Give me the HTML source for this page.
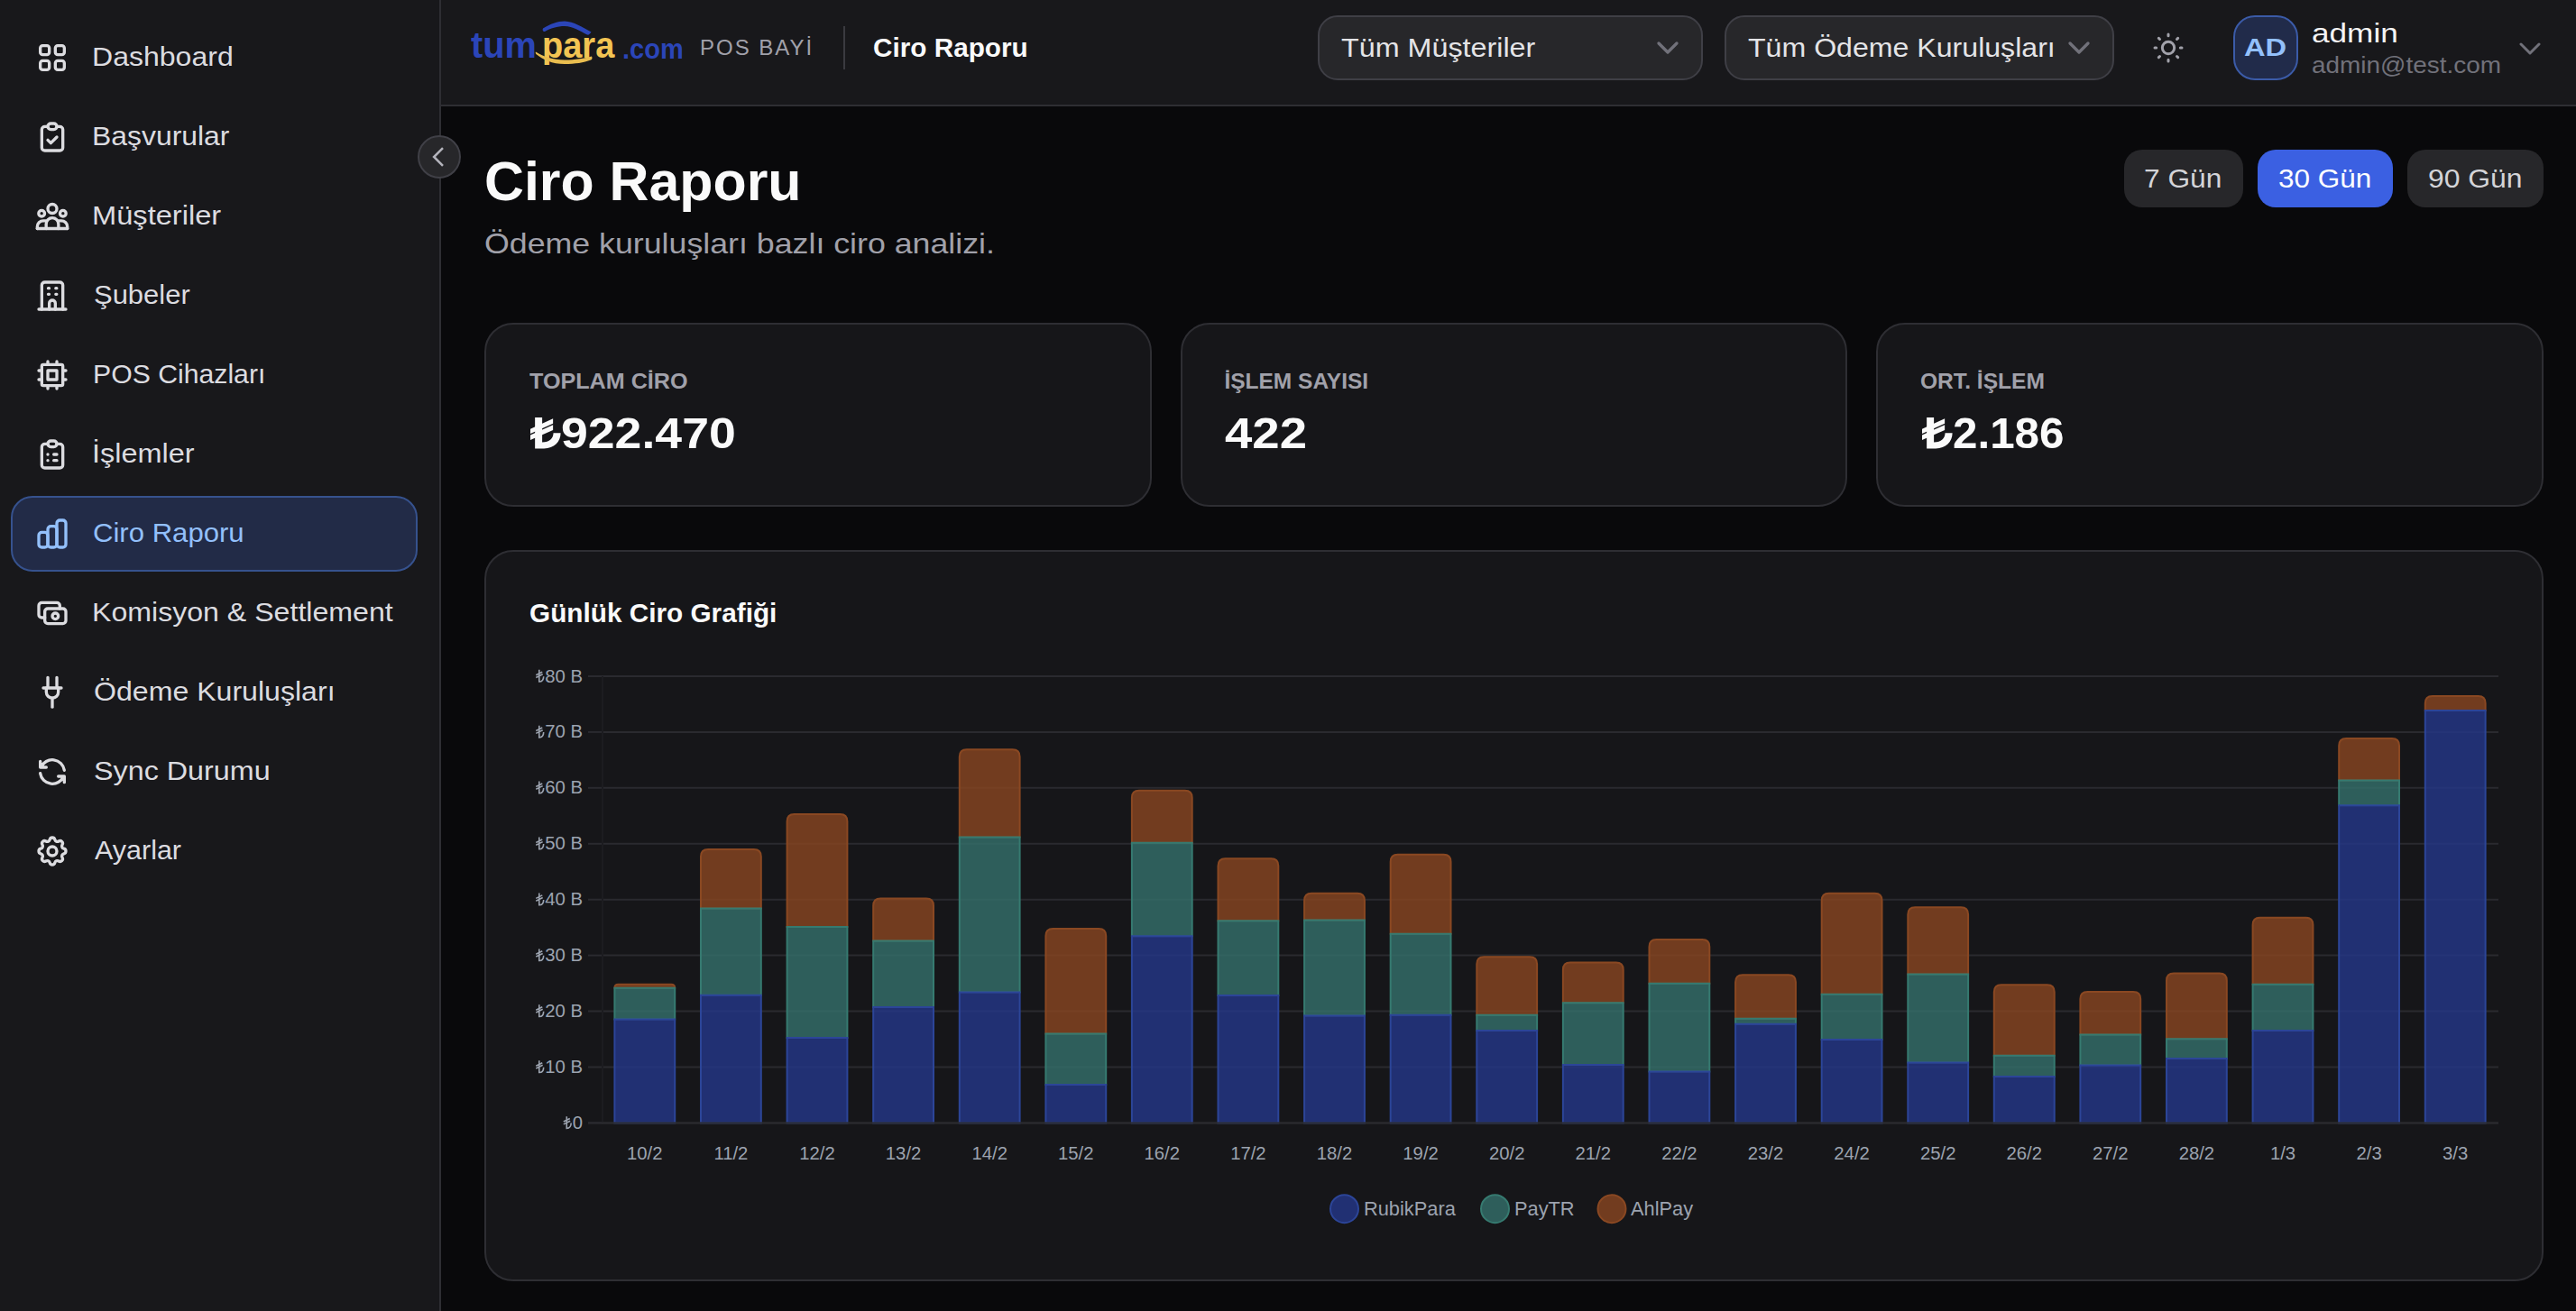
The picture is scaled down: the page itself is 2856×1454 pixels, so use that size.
<!DOCTYPE html>
<html><head><meta charset="utf-8"><title>Ciro Raporu</title>
<style>
html,body{margin:0;padding:0;}
body{width:2856px;height:1454px;overflow:hidden;position:relative;background:#09090b;font-family:"Liberation Sans",sans-serif;}
.t{position:absolute;line-height:1;white-space:nowrap;}
svg{display:block;}
</style></head><body>
<div style="position:absolute;left:0px;top:0px;width:487.0px;height:1454px;background:#18181b;border-radius:0px;"></div>
<div style="position:absolute;left:487px;top:0px;width:2.0px;height:1454px;background:#2e2e33;border-radius:0px;"></div>
<svg style="position:absolute;left:38.0px;top:44.0px;" width="40" height="40" viewBox="0 0 24 24" fill="none" stroke="#dcdce0" stroke-width="2" stroke-linecap="round" stroke-linejoin="round"><rect x="4" y="4" width="6" height="6" rx="1.6"/><rect x="14" y="4" width="6" height="6" rx="1.6"/><rect x="4" y="14" width="6" height="6" rx="1.6"/><rect x="14" y="14" width="6" height="6" rx="1.6"/></svg>
<div class="t" style="left:102.4px;top:49.2px;font-size:29px;color:#dcdce0;font-weight:normal;transform:scaleX(1.1045);transform-origin:0 0;">Dashboard</div>
<svg style="position:absolute;left:38.0px;top:132.0px;" width="40" height="40" viewBox="0 0 24 24" fill="none" stroke="#dcdce0" stroke-width="2" stroke-linecap="round" stroke-linejoin="round"><path d="M9 5h-2a2 2 0 0 0 -2 2v12a2 2 0 0 0 2 2h10a2 2 0 0 0 2 -2v-12a2 2 0 0 0 -2 -2h-2"/><path d="M9 5a2 2 0 0 1 2 -2h2a2 2 0 0 1 2 2a2 2 0 0 1 -2 2h-2a2 2 0 0 1 -2 -2z"/><path d="M9 14l2 2l4 -4"/></svg>
<div class="t" style="left:102.4px;top:137.2px;font-size:29px;color:#dcdce0;font-weight:normal;transform:scaleX(1.0998);transform-origin:0 0;">Başvurular</div>
<svg style="position:absolute;left:38.0px;top:220.0px;" width="40" height="40" viewBox="0 0 24 24" fill="none" stroke="#dcdce0" stroke-width="2" stroke-linecap="round" stroke-linejoin="round"><circle cx="12" cy="6.9" r="3"/><circle cx="4.9" cy="10" r="2"/><circle cx="19.1" cy="10" r="2"/><path d="M2 20.1v-1.2a4 4 0 0 1 4 -4h2"/><path d="M22 20.1v-1.2a4 4 0 0 0 -4 -4h-2"/><path d="M7.9 20.1v-3a4.1 4.1 0 0 1 8.2 0v3"/><path d="M2 20.1h20"/></svg>
<div class="t" style="left:102.3px;top:225.2px;font-size:29px;color:#dcdce0;font-weight:normal;transform:scaleX(1.1250);transform-origin:0 0;">Müşteriler</div>
<svg style="position:absolute;left:38.0px;top:308.0px;" width="40" height="40" viewBox="0 0 24 24" fill="none" stroke="#dcdce0" stroke-width="2" stroke-linecap="round" stroke-linejoin="round"><path d="M3 21h18"/><path d="M5 21v-16a2 2 0 0 1 2 -2h10a2 2 0 0 1 2 2v16"/><path d="M9.3 7h.6M14.3 7h.6M9.3 11h.6M14.3 11h.6"/><path d="M10 21v-4a2 2 0 0 1 4 0v4"/></svg>
<div class="t" style="left:103.6px;top:313.2px;font-size:29px;color:#dcdce0;font-weight:normal;transform:scaleX(1.0677);transform-origin:0 0;">Şubeler</div>
<svg style="position:absolute;left:38.0px;top:396.0px;" width="40" height="40" viewBox="0 0 24 24" fill="none" stroke="#dcdce0" stroke-width="2" stroke-linecap="round" stroke-linejoin="round"><path d="M5 6a1 1 0 0 1 1 -1h12a1 1 0 0 1 1 1v12a1 1 0 0 1 -1 1h-12a1 1 0 0 1 -1 -1z"/><path d="M9 9h6v6h-6z"/><path d="M3 9h2M3 15h2M9 3v2M15 3v2M21 9h-2M21 15h-2M15 21v-2M9 21v-2"/></svg>
<div class="t" style="left:102.5px;top:401.2px;font-size:29px;color:#dcdce0;font-weight:normal;transform:scaleX(1.0415);transform-origin:0 0;">POS Cihazları</div>
<svg style="position:absolute;left:38.0px;top:484.0px;" width="40" height="40" viewBox="0 0 24 24" fill="none" stroke="#dcdce0" stroke-width="2" stroke-linecap="round" stroke-linejoin="round"><path d="M9 5h-2a2 2 0 0 0 -2 2v12a2 2 0 0 0 2 2h10a2 2 0 0 0 2 -2v-12a2 2 0 0 0 -2 -2h-2"/><path d="M9 5a2 2 0 0 1 2 -2h2a2 2 0 0 1 2 2a2 2 0 0 1 -2 2h-2a2 2 0 0 1 -2 -2z"/><path d="M9 12h.01M13 12h2M9 16h.01M13 16h2"/></svg>
<div class="t" style="left:102.0px;top:489.2px;font-size:29px;color:#dcdce0;font-weight:normal;transform:scaleX(1.1184);transform-origin:0 0;">İşlemler</div>
<div style="position:absolute;left:12px;top:550px;width:451.0px;height:84px;background:#222b47;border:2px solid #36528e;box-sizing:border-box;border-radius:24px;"></div>
<svg style="position:absolute;left:38.0px;top:572.0px;" width="40" height="40" viewBox="0 0 24 24" fill="none" stroke="#93c0fb" stroke-width="2" stroke-linecap="round" stroke-linejoin="round"><path d="M3 13a2 2 0 0 1 2 -2h2a2 2 0 0 1 2 2v6a2 2 0 0 1 -2 2h-2a2 2 0 0 1 -2 -2z"/><path d="M9 9a2 2 0 0 1 2 -2h2a2 2 0 0 1 2 2v10a2 2 0 0 1 -2 2h-2a2 2 0 0 1 -2 -2z"/><path d="M15 5a2 2 0 0 1 2 -2h2a2 2 0 0 1 2 2v14a2 2 0 0 1 -2 2h-2a2 2 0 0 1 -2 -2z"/></svg>
<div class="t" style="left:103.4px;top:577.2px;font-size:29px;color:#93c0fb;font-weight:normal;transform:scaleX(1.0723);transform-origin:0 0;">Ciro Raporu</div>
<svg style="position:absolute;left:38.0px;top:660.0px;" width="40" height="40" viewBox="0 0 24 24" fill="none" stroke="#dcdce0" stroke-width="2" stroke-linecap="round" stroke-linejoin="round"><path d="M7 11a2 2 0 0 1 2 -2h10a2 2 0 0 1 2 2v6a2 2 0 0 1 -2 2h-10a2 2 0 0 1 -2 -2z"/><circle cx="14" cy="14" r="2"/><path d="M17 9v-2a2 2 0 0 0 -2 -2h-10a2 2 0 0 0 -2 2v6a2 2 0 0 0 2 2h2"/></svg>
<div class="t" style="left:102.4px;top:665.2px;font-size:29px;color:#dcdce0;font-weight:normal;transform:scaleX(1.1070);transform-origin:0 0;">Komisyon &amp; Settlement</div>
<svg style="position:absolute;left:38.0px;top:748.0px;" width="40" height="40" viewBox="0 0 24 24" fill="none" stroke="#dcdce0" stroke-width="2" stroke-linecap="round" stroke-linejoin="round"><path d="M9 2v6M15 2v6"/><path d="M6 9h12"/><path d="M8 9v2.7a4 4 0 0 0 8 0v-2.7"/><path d="M12 15.7v6"/></svg>
<div class="t" style="left:103.5px;top:753.2px;font-size:29px;color:#dcdce0;font-weight:normal;transform:scaleX(1.1067);transform-origin:0 0;">Ödeme Kuruluşları</div>
<svg style="position:absolute;left:38.0px;top:836.0px;" width="40" height="40" viewBox="0 0 24 24" fill="none" stroke="#dcdce0" stroke-width="2" stroke-linecap="round" stroke-linejoin="round"><path d="M20 11a8.1 8.1 0 0 0 -15.5 -2m-.5 -4v4h4"/><path d="M4 13a8.1 8.1 0 0 0 15.5 2m.5 4v-4h-4"/></svg>
<div class="t" style="left:103.5px;top:841.2px;font-size:29px;color:#dcdce0;font-weight:normal;transform:scaleX(1.1135);transform-origin:0 0;">Sync Durumu</div>
<svg style="position:absolute;left:38.0px;top:924.0px;" width="40" height="40" viewBox="0 0 24 24" fill="none" stroke="#dcdce0" stroke-width="2" stroke-linecap="round" stroke-linejoin="round"><path d="M10.325 4.317c.426 -1.756 2.924 -1.756 3.35 0a1.724 1.724 0 0 0 2.573 1.066c1.543 -.94 3.31 .826 2.37 2.37a1.724 1.724 0 0 0 1.065 2.572c1.756 .426 1.756 2.924 0 3.35a1.724 1.724 0 0 0 -1.066 2.573c.94 1.543 -.826 3.31 -2.37 2.37a1.724 1.724 0 0 0 -2.572 1.065c-.426 1.756 -2.924 1.756 -3.35 0a1.724 1.724 0 0 0 -2.573 -1.066c-1.543 .94 -3.31 -.826 -2.37 -2.37a1.724 1.724 0 0 0 -1.065 -2.572c-1.756 -.426 -1.756 -2.924 0 -3.35a1.724 1.724 0 0 0 1.066 -2.573c-.94 -1.543 .826 -3.31 2.37 -2.37c1 .608 2.296 .07 2.572 -1.065z"/><circle cx="12" cy="12" r="3"/></svg>
<div class="t" style="left:104.9px;top:929.2px;font-size:29px;color:#dcdce0;font-weight:normal;transform:scaleX(1.0513);transform-origin:0 0;">Ayarlar</div>
<div style="position:absolute;left:463px;top:150px;width:48.0px;height:48px;background:#27272a;border:2px solid #404047;box-sizing:border-box;border-radius:24px;"></div>
<svg style="position:absolute;left:471.0px;top:158.0px;stroke-linecap:butt;stroke-linejoin:miter" width="32" height="32" viewBox="0 0 24 24" fill="none" stroke="#b4b4bc" stroke-width="1.9" stroke-linecap="round" stroke-linejoin="round"><path d="M15 4.6L7.6 12L15 19.4"/></svg>
<div style="position:absolute;left:489px;top:0px;width:2367.0px;height:116px;background:#18181b;border-radius:0px;"></div>
<div style="position:absolute;left:489px;top:116px;width:2367.0px;height:2px;background:#2e2e33;border-radius:0px;"></div>
<div class="t" style="left:521.5px;top:30.3px;font-size:41px;color:#2b45b8;font-weight:bold;transform:scaleX(0.9707);transform-origin:0 0;">tum</div>
<div class="t" style="left:600.5px;top:30.3px;font-size:41px;color:#f2c453;font-weight:bold;transform:scaleX(0.9268);transform-origin:0 0;">para</div>
<div class="t" style="left:690.0px;top:38.8px;font-size:31px;color:#2b45b8;font-weight:bold;transform:scaleX(0.9367);transform-origin:0 0;">.com</div>
<svg style="position:absolute;left:0;top:0" width="800" height="100"><path d="M602 31.5 C610 26.5 618 23.5 626 23.5 C636 24 646 30 655.5 35.5 C654 38 652.5 39 651 38.5 C643 34.5 635 29 626 29 C618 29 610 31.5 604 35 C602 35.5 601 33 602 31.5Z" fill="#2b45b8"/><path d="M594 57.5 C603 63 613 66.5 626 66.5 C638 66.5 648 64.5 656 62.5 C657 64 656.5 66 655 66.5 C647 69.5 638 71 626 71 C612 71 602 66 595 60.5 C593.5 59.5 593.5 58 594 57.5Z" fill="#e9bd4f"/></svg>
<div class="t" style="left:776.0px;top:40.7px;font-size:24px;color:#a1a1aa;font-weight:normal;letter-spacing:2px">POS BAYİ</div>
<div style="position:absolute;left:935px;top:29px;width:2.0px;height:48px;background:#3a3a40;border-radius:0px;"></div>
<div class="t" style="left:968.3px;top:38.7px;font-size:29px;color:#fafafa;font-weight:bold;transform:scaleX(1.0246);transform-origin:0 0;">Ciro Raporu</div>
<div style="position:absolute;left:1461px;top:17px;width:427.0px;height:72px;background:#27272a;border:2px solid #3f3f46;box-sizing:border-box;border-radius:22px;"></div>
<div class="t" style="left:1487.3px;top:37.9px;font-size:30px;color:#e4e4e7;font-weight:normal;transform:scaleX(1.0762);transform-origin:0 0;">Tüm Müşteriler</div>
<svg style="position:absolute;left:1829.0px;top:33.0px;" width="40" height="40" viewBox="0 0 24 24" fill="none" stroke="#71717a" stroke-width="2" stroke-linecap="round" stroke-linejoin="round"><path d="M6 9l6 6l6 -6"/></svg>
<div style="position:absolute;left:1912px;top:17px;width:432.0px;height:72px;background:#27272a;border:2px solid #3f3f46;box-sizing:border-box;border-radius:22px;"></div>
<div class="t" style="left:1938.3px;top:37.9px;font-size:30px;color:#e4e4e7;font-weight:normal;transform:scaleX(1.0701);transform-origin:0 0;">Tüm Ödeme Kuruluşları</div>
<svg style="position:absolute;left:2285.0px;top:33.0px;" width="40" height="40" viewBox="0 0 24 24" fill="none" stroke="#71717a" stroke-width="2" stroke-linecap="round" stroke-linejoin="round"><path d="M6 9l6 6l6 -6"/></svg>
<svg style="position:absolute;left:2384.0px;top:33.0px;" width="40" height="40" viewBox="0 0 24 24" fill="none" stroke="#a1a1aa" stroke-width="1.8" stroke-linecap="round" stroke-linejoin="round"><circle cx="12" cy="12" r="4"/><path d="M3 12h1m8 -9v1m8 8h1m-9 8v1m-6.4 -15.4l.7 .7m12.1 -.7l-.7 .7m0 11.4l.7 .7m-12.1 -.7l-.7 .7"/></svg>
<div style="position:absolute;left:2476px;top:17px;width:72.0px;height:72px;background:#212b4a;border:2px solid #3b5ba8;box-sizing:border-box;border-radius:24px;"></div>
<div class="t" style="left:2488.2px;top:40.1px;font-size:27px;color:#93c0fb;font-weight:bold;transform:scaleX(1.2100);transform-origin:0 0;">AD</div>
<div class="t" style="left:2562.5px;top:22.1px;font-size:30px;color:#f4f4f5;font-weight:normal;transform:scaleX(1.1722);transform-origin:0 0;">admin</div>
<div class="t" style="left:2562.8px;top:59.0px;font-size:26px;color:#71717a;font-weight:normal;transform:scaleX(1.0746);transform-origin:0 0;">admin@test.com</div>
<svg style="position:absolute;left:2784.5px;top:34.0px;" width="40" height="40" viewBox="0 0 24 24" fill="none" stroke="#71717a" stroke-width="1.8" stroke-linecap="round" stroke-linejoin="round"><path d="M6 9l6 6l6 -6"/></svg>
<div class="t" style="left:536.5px;top:171.4px;font-size:61px;color:#fafafa;font-weight:bold;transform:scaleX(0.9973);transform-origin:0 0;">Ciro Raporu</div>
<div class="t" style="left:536.8px;top:255.2px;font-size:30.5px;color:#a1a1aa;font-weight:normal;transform:scaleX(1.1715);transform-origin:0 0;">Ödeme kuruluşları bazlı ciro analizi.</div>
<div style="position:absolute;left:2355px;top:166px;width:132.0px;height:64px;background:#27272a;border-radius:20px;"></div>
<div class="t" style="left:2377.4px;top:183.9px;font-size:29px;color:#d4d4d8;font-weight:normal;transform:scaleX(1.0922);transform-origin:0 0;">7 Gün</div>
<div style="position:absolute;left:2503px;top:166px;width:150.0px;height:64px;background:#3b60e2;border-radius:20px;"></div>
<div class="t" style="left:2525.8px;top:183.9px;font-size:29px;color:#ffffff;font-weight:normal;transform:scaleX(1.0853);transform-origin:0 0;">30 Gün</div>
<div style="position:absolute;left:2669px;top:166px;width:151.0px;height:64px;background:#27272a;border-radius:20px;"></div>
<div class="t" style="left:2691.5px;top:183.9px;font-size:29px;color:#d4d4d8;font-weight:normal;transform:scaleX(1.0992);transform-origin:0 0;">90 Gün</div>
<div style="position:absolute;left:537px;top:358px;width:739.7px;height:204px;background:#161619;border:2px solid #2e2e33;box-sizing:border-box;border-radius:32px;"></div>
<div class="t" style="left:586.7px;top:411.1px;font-size:24.5px;color:#a1a1aa;font-weight:bold;transform:scaleX(1.0259);transform-origin:0 0;">TOPLAM CİRO</div>
<svg style="position:absolute;left:588px;top:462.5px;overflow:visible" width="34.5" height="34.5" viewBox="0 0 1 1" fill="#fafafa"><path d="M0.149 0H0.380V0.80C0.62 0.80 0.74 0.67 0.74 0.503H0.974C0.974 0.79 0.76 1.0 0.44 1.0H0.149Z"/><path d="M0 0.368L0.728 0.035V0.199L0 0.524Z"/><path d="M0 0.564L0.728 0.24V0.404L0 0.728Z"/></svg>
<div class="t" style="left:621.6px;top:455.5px;font-size:49px;color:#fafafa;font-weight:bold;transform:scaleX(1.0939);transform-origin:0 0;">922.470</div>
<div style="position:absolute;left:1308.7px;top:358px;width:739.6px;height:204px;background:#161619;border:2px solid #2e2e33;box-sizing:border-box;border-radius:32px;"></div>
<div class="t" style="left:1357.4px;top:411.1px;font-size:24.5px;color:#a1a1aa;font-weight:bold;">İŞLEM SAYISI</div>
<div class="t" style="left:1358.2px;top:455.5px;font-size:49px;color:#fafafa;font-weight:bold;transform:scaleX(1.1132);transform-origin:0 0;">422</div>
<div style="position:absolute;left:2080.3px;top:358px;width:739.7px;height:204px;background:#161619;border:2px solid #2e2e33;box-sizing:border-box;border-radius:32px;"></div>
<div class="t" style="left:2129.0px;top:411.1px;font-size:24.5px;color:#a1a1aa;font-weight:bold;transform:scaleX(1.0033);transform-origin:0 0;">ORT. İŞLEM</div>
<svg style="position:absolute;left:2131px;top:462.5px;overflow:visible" width="34.5" height="34.5" viewBox="0 0 1 1" fill="#fafafa"><path d="M0.149 0H0.380V0.80C0.62 0.80 0.74 0.67 0.74 0.503H0.974C0.974 0.79 0.76 1.0 0.44 1.0H0.149Z"/><path d="M0 0.368L0.728 0.035V0.199L0 0.524Z"/><path d="M0 0.564L0.728 0.24V0.404L0 0.728Z"/></svg>
<div class="t" style="left:2164.8px;top:455.5px;font-size:49px;color:#fafafa;font-weight:bold;transform:scaleX(1.0071);transform-origin:0 0;">2.186</div>
<div style="position:absolute;left:537px;top:610px;width:2283.0px;height:811px;background:#161619;border:2px solid #2e2e33;box-sizing:border-box;border-radius:32px;"></div>
<div class="t" style="left:586.8px;top:665.2px;font-size:29.5px;color:#fafafa;font-weight:bold;transform:scaleX(1.0083);transform-origin:0 0;">Günlük Ciro Grafiği</div>
<svg style="position:absolute;left:0;top:0" width="2856" height="1454" viewBox="0 0 2856 1454"><line x1="667" y1="1245.4" x2="2770" y2="1245.4" stroke="#2a2a2f" stroke-width="2"/><line x1="652" y1="1245.4" x2="667" y2="1245.4" stroke="#2a2a2f" stroke-width="2"/><line x1="667" y1="1183.5" x2="2770" y2="1183.5" stroke="#2a2a2f" stroke-width="2"/><line x1="652" y1="1183.5" x2="667" y2="1183.5" stroke="#2a2a2f" stroke-width="2"/><line x1="667" y1="1121.5" x2="2770" y2="1121.5" stroke="#2a2a2f" stroke-width="2"/><line x1="652" y1="1121.5" x2="667" y2="1121.5" stroke="#2a2a2f" stroke-width="2"/><line x1="667" y1="1059.6" x2="2770" y2="1059.6" stroke="#2a2a2f" stroke-width="2"/><line x1="652" y1="1059.6" x2="667" y2="1059.6" stroke="#2a2a2f" stroke-width="2"/><line x1="667" y1="997.7" x2="2770" y2="997.7" stroke="#2a2a2f" stroke-width="2"/><line x1="652" y1="997.7" x2="667" y2="997.7" stroke="#2a2a2f" stroke-width="2"/><line x1="667" y1="935.8" x2="2770" y2="935.8" stroke="#2a2a2f" stroke-width="2"/><line x1="652" y1="935.8" x2="667" y2="935.8" stroke="#2a2a2f" stroke-width="2"/><line x1="667" y1="873.8" x2="2770" y2="873.8" stroke="#2a2a2f" stroke-width="2"/><line x1="652" y1="873.8" x2="667" y2="873.8" stroke="#2a2a2f" stroke-width="2"/><line x1="667" y1="811.9" x2="2770" y2="811.9" stroke="#2a2a2f" stroke-width="2"/><line x1="652" y1="811.9" x2="667" y2="811.9" stroke="#2a2a2f" stroke-width="2"/><line x1="667" y1="750.0" x2="2770" y2="750.0" stroke="#2a2a2f" stroke-width="2"/><line x1="652" y1="750.0" x2="667" y2="750.0" stroke="#2a2a2f" stroke-width="2"/><line x1="668" y1="750.0" x2="668" y2="1245.4" stroke="#1c1c20" stroke-width="2"/><path d="M681.4 1095.7V1095.7Q681.4 1091.8 685.3 1091.8H744.3Q748.2 1091.8 748.2 1095.7V1095.7Z" fill="#8a4620" fill-opacity="0.8" stroke="#8a4822" stroke-width="2" /><path d="M681.4 1130.4V1095.7H748.2V1130.4Z" fill="#35716b" fill-opacity="0.8" stroke="#367a70" stroke-width="2" /><path d="M681.4 1245.4V1130.4H748.2V1245.4Z" fill="#24378a" fill-opacity="0.8" stroke="#2c4598" stroke-width="2" /><path d="M777.0 1007.6V950.0Q777.0 942.0 785.0 942.0H835.8Q843.8 942.0 843.8 950.0V1007.6Z" fill="#8a4620" fill-opacity="0.8" stroke="#8a4822" stroke-width="2" /><path d="M777.0 1103.7V1007.6H843.8V1103.7Z" fill="#35716b" fill-opacity="0.8" stroke="#367a70" stroke-width="2" /><path d="M777.0 1245.4V1103.7H843.8V1245.4Z" fill="#24378a" fill-opacity="0.8" stroke="#2c4598" stroke-width="2" /><path d="M872.6 1028.0V911.0Q872.6 903.0 880.6 903.0H931.4Q939.4 903.0 939.4 911.0V1028.0Z" fill="#8a4620" fill-opacity="0.8" stroke="#8a4822" stroke-width="2" /><path d="M872.6 1151.0V1028.0H939.4V1151.0Z" fill="#35716b" fill-opacity="0.8" stroke="#367a70" stroke-width="2" /><path d="M872.6 1245.4V1151.0H939.4V1245.4Z" fill="#24378a" fill-opacity="0.8" stroke="#2c4598" stroke-width="2" /><path d="M968.2 1043.4V1004.4Q968.2 996.4 976.2 996.4H1027.0Q1035.0 996.4 1035.0 1004.4V1043.4Z" fill="#8a4620" fill-opacity="0.8" stroke="#8a4822" stroke-width="2" /><path d="M968.2 1117.0V1043.4H1035.0V1117.0Z" fill="#35716b" fill-opacity="0.8" stroke="#367a70" stroke-width="2" /><path d="M968.2 1245.4V1117.0H1035.0V1245.4Z" fill="#24378a" fill-opacity="0.8" stroke="#2c4598" stroke-width="2" /><path d="M1063.8 928.4V839.2Q1063.8 831.2 1071.8 831.2H1122.6Q1130.6 831.2 1130.6 839.2V928.4Z" fill="#8a4620" fill-opacity="0.8" stroke="#8a4822" stroke-width="2" /><path d="M1063.8 1100.6V928.4H1130.6V1100.6Z" fill="#35716b" fill-opacity="0.8" stroke="#367a70" stroke-width="2" /><path d="M1063.8 1245.4V1100.6H1130.6V1245.4Z" fill="#24378a" fill-opacity="0.8" stroke="#2c4598" stroke-width="2" /><path d="M1159.4 1146.5V1038.1Q1159.4 1030.1 1167.4 1030.1H1218.2Q1226.2 1030.1 1226.2 1038.1V1146.5Z" fill="#8a4620" fill-opacity="0.8" stroke="#8a4822" stroke-width="2" /><path d="M1159.4 1203.0V1146.5H1226.2V1203.0Z" fill="#35716b" fill-opacity="0.8" stroke="#367a70" stroke-width="2" /><path d="M1159.4 1245.4V1203.0H1226.2V1245.4Z" fill="#24378a" fill-opacity="0.8" stroke="#2c4598" stroke-width="2" /><path d="M1254.9 934.7V884.8Q1254.9 876.8 1262.9 876.8H1313.7Q1321.7 876.8 1321.7 884.8V934.7Z" fill="#8a4620" fill-opacity="0.8" stroke="#8a4822" stroke-width="2" /><path d="M1254.9 1038.2V934.7H1321.7V1038.2Z" fill="#35716b" fill-opacity="0.8" stroke="#367a70" stroke-width="2" /><path d="M1254.9 1245.4V1038.2H1321.7V1245.4Z" fill="#24378a" fill-opacity="0.8" stroke="#2c4598" stroke-width="2" /><path d="M1350.5 1021.3V960.2Q1350.5 952.2 1358.5 952.2H1409.3Q1417.3 952.2 1417.3 960.2V1021.3Z" fill="#8a4620" fill-opacity="0.8" stroke="#8a4822" stroke-width="2" /><path d="M1350.5 1104.1V1021.3H1417.3V1104.1Z" fill="#35716b" fill-opacity="0.8" stroke="#367a70" stroke-width="2" /><path d="M1350.5 1245.4V1104.1H1417.3V1245.4Z" fill="#24378a" fill-opacity="0.8" stroke="#2c4598" stroke-width="2" /><path d="M1446.1 1020.6V998.8Q1446.1 990.8 1454.1 990.8H1504.9Q1512.9 990.8 1512.9 998.8V1020.6Z" fill="#8a4620" fill-opacity="0.8" stroke="#8a4822" stroke-width="2" /><path d="M1446.1 1126.6V1020.6H1512.9V1126.6Z" fill="#35716b" fill-opacity="0.8" stroke="#367a70" stroke-width="2" /><path d="M1446.1 1245.4V1126.6H1512.9V1245.4Z" fill="#24378a" fill-opacity="0.8" stroke="#2c4598" stroke-width="2" /><path d="M1541.7 1035.7V955.7Q1541.7 947.7 1549.7 947.7H1600.5Q1608.5 947.7 1608.5 955.7V1035.7Z" fill="#8a4620" fill-opacity="0.8" stroke="#8a4822" stroke-width="2" /><path d="M1541.7 1125.8V1035.7H1608.5V1125.8Z" fill="#35716b" fill-opacity="0.8" stroke="#367a70" stroke-width="2" /><path d="M1541.7 1245.4V1125.8H1608.5V1245.4Z" fill="#24378a" fill-opacity="0.8" stroke="#2c4598" stroke-width="2" /><path d="M1637.3 1125.8V1069.3Q1637.3 1061.3 1645.3 1061.3H1696.1Q1704.1 1061.3 1704.1 1069.3V1125.8Z" fill="#8a4620" fill-opacity="0.8" stroke="#8a4822" stroke-width="2" /><path d="M1637.3 1143.0V1125.8H1704.1V1143.0Z" fill="#35716b" fill-opacity="0.8" stroke="#367a70" stroke-width="2" /><path d="M1637.3 1245.4V1143.0H1704.1V1245.4Z" fill="#24378a" fill-opacity="0.8" stroke="#2c4598" stroke-width="2" /><path d="M1732.9 1112.2V1075.6Q1732.9 1067.6 1740.9 1067.6H1791.7Q1799.7 1067.6 1799.7 1075.6V1112.2Z" fill="#8a4620" fill-opacity="0.8" stroke="#8a4822" stroke-width="2" /><path d="M1732.9 1180.9V1112.2H1799.7V1180.9Z" fill="#35716b" fill-opacity="0.8" stroke="#367a70" stroke-width="2" /><path d="M1732.9 1245.4V1180.9H1799.7V1245.4Z" fill="#24378a" fill-opacity="0.8" stroke="#2c4598" stroke-width="2" /><path d="M1828.5 1090.8V1050.0Q1828.5 1042.0 1836.5 1042.0H1887.3Q1895.3 1042.0 1895.3 1050.0V1090.8Z" fill="#8a4620" fill-opacity="0.8" stroke="#8a4822" stroke-width="2" /><path d="M1828.5 1188.6V1090.8H1895.3V1188.6Z" fill="#35716b" fill-opacity="0.8" stroke="#367a70" stroke-width="2" /><path d="M1828.5 1245.4V1188.6H1895.3V1245.4Z" fill="#24378a" fill-opacity="0.8" stroke="#2c4598" stroke-width="2" /><path d="M1924.1 1129.7V1089.3Q1924.1 1081.3 1932.1 1081.3H1982.9Q1990.9 1081.3 1990.9 1089.3V1129.7Z" fill="#8a4620" fill-opacity="0.8" stroke="#8a4822" stroke-width="2" /><path d="M1924.1 1135.7V1129.7H1990.9V1135.7Z" fill="#35716b" fill-opacity="0.8" stroke="#367a70" stroke-width="2" /><path d="M1924.1 1245.4V1135.7H1990.9V1245.4Z" fill="#24378a" fill-opacity="0.8" stroke="#2c4598" stroke-width="2" /><path d="M2019.7 1102.7V998.8Q2019.7 990.8 2027.7 990.8H2078.5Q2086.5 990.8 2086.5 998.8V1102.7Z" fill="#8a4620" fill-opacity="0.8" stroke="#8a4822" stroke-width="2" /><path d="M2019.7 1152.9V1102.7H2086.5V1152.9Z" fill="#35716b" fill-opacity="0.8" stroke="#367a70" stroke-width="2" /><path d="M2019.7 1245.4V1152.9H2086.5V1245.4Z" fill="#24378a" fill-opacity="0.8" stroke="#2c4598" stroke-width="2" /><path d="M2115.3 1080.6V1014.2Q2115.3 1006.2 2123.3 1006.2H2174.1Q2182.1 1006.2 2182.1 1014.2V1080.6Z" fill="#8a4620" fill-opacity="0.8" stroke="#8a4822" stroke-width="2" /><path d="M2115.3 1178.5V1080.6H2182.1V1178.5Z" fill="#35716b" fill-opacity="0.8" stroke="#367a70" stroke-width="2" /><path d="M2115.3 1245.4V1178.5H2182.1V1245.4Z" fill="#24378a" fill-opacity="0.8" stroke="#2c4598" stroke-width="2" /><path d="M2210.8 1170.7V1100.2Q2210.8 1092.2 2218.8 1092.2H2269.7Q2277.7 1092.2 2277.7 1100.2V1170.7Z" fill="#8a4620" fill-opacity="0.8" stroke="#8a4822" stroke-width="2" /><path d="M2210.8 1193.9V1170.7H2277.7V1193.9Z" fill="#35716b" fill-opacity="0.8" stroke="#367a70" stroke-width="2" /><path d="M2210.8 1245.4V1193.9H2277.7V1245.4Z" fill="#24378a" fill-opacity="0.8" stroke="#2c4598" stroke-width="2" /><path d="M2306.4 1147.6V1107.9Q2306.4 1099.9 2314.4 1099.9H2365.2Q2373.2 1099.9 2373.2 1107.9V1147.6Z" fill="#8a4620" fill-opacity="0.8" stroke="#8a4822" stroke-width="2" /><path d="M2306.4 1181.6V1147.6H2373.2V1181.6Z" fill="#35716b" fill-opacity="0.8" stroke="#367a70" stroke-width="2" /><path d="M2306.4 1245.4V1181.6H2373.2V1245.4Z" fill="#24378a" fill-opacity="0.8" stroke="#2c4598" stroke-width="2" /><path d="M2402.0 1152.2V1087.5Q2402.0 1079.5 2410.0 1079.5H2460.8Q2468.8 1079.5 2468.8 1087.5V1152.2Z" fill="#8a4620" fill-opacity="0.8" stroke="#8a4822" stroke-width="2" /><path d="M2402.0 1173.9V1152.2H2468.8V1173.9Z" fill="#35716b" fill-opacity="0.8" stroke="#367a70" stroke-width="2" /><path d="M2402.0 1245.4V1173.9H2468.8V1245.4Z" fill="#24378a" fill-opacity="0.8" stroke="#2c4598" stroke-width="2" /><path d="M2497.6 1091.8V1025.8Q2497.6 1017.8 2505.6 1017.8H2556.4Q2564.4 1017.8 2564.4 1025.8V1091.8Z" fill="#8a4620" fill-opacity="0.8" stroke="#8a4822" stroke-width="2" /><path d="M2497.6 1143.0V1091.8H2564.4V1143.0Z" fill="#35716b" fill-opacity="0.8" stroke="#367a70" stroke-width="2" /><path d="M2497.6 1245.4V1143.0H2564.4V1245.4Z" fill="#24378a" fill-opacity="0.8" stroke="#2c4598" stroke-width="2" /><path d="M2593.2 865.5V826.9Q2593.2 818.9 2601.2 818.9H2652.0Q2660.0 818.9 2660.0 826.9V865.5Z" fill="#8a4620" fill-opacity="0.8" stroke="#8a4822" stroke-width="2" /><path d="M2593.2 893.3V865.5H2660.0V893.3Z" fill="#35716b" fill-opacity="0.8" stroke="#367a70" stroke-width="2" /><path d="M2593.2 1245.4V893.3H2660.0V1245.4Z" fill="#24378a" fill-opacity="0.8" stroke="#2c4598" stroke-width="2" /><path d="M2688.8 788.0V779.9Q2688.8 771.9 2696.8 771.9H2747.6Q2755.6 771.9 2755.6 779.9V788.0Z" fill="#8a4620" fill-opacity="0.8" stroke="#8a4822" stroke-width="2" /><path d="M2688.8 1245.4V788.0H2755.6V1245.4Z" fill="#24378a" fill-opacity="0.8" stroke="#2c4598" stroke-width="2" /><line x1="652" y1="1245.4" x2="2770" y2="1245.4" stroke="#2a2a2f" stroke-width="2"/><svg x="624.5" y="1237.9" width="14.0" height="14.0" viewBox="0 0 1 1" overflow="visible" stroke="#9ca3af"><path d="M0.27 0.02V0.96C0.50 0.96 0.62 0.80 0.62 0.55M0.02 0.44L0.52 0.19M0.02 0.64L0.55 0.38" fill="none" stroke-width="0.115" stroke-linecap="butt"/></svg><text x="634.7" y="1251.9" font-family="Liberation Sans" font-size="20.3" fill="#9ca3af">0</text><svg x="594.0" y="1176.0" width="14.0" height="14.0" viewBox="0 0 1 1" overflow="visible" stroke="#9ca3af"><path d="M0.27 0.02V0.96C0.50 0.96 0.62 0.80 0.62 0.55M0.02 0.44L0.52 0.19M0.02 0.64L0.55 0.38" fill="none" stroke-width="0.115" stroke-linecap="butt"/></svg><text x="604.2" y="1190.0" font-family="Liberation Sans" font-size="20.3" fill="#9ca3af">10 B</text><svg x="594.0" y="1114.0" width="14.0" height="14.0" viewBox="0 0 1 1" overflow="visible" stroke="#9ca3af"><path d="M0.27 0.02V0.96C0.50 0.96 0.62 0.80 0.62 0.55M0.02 0.44L0.52 0.19M0.02 0.64L0.55 0.38" fill="none" stroke-width="0.115" stroke-linecap="butt"/></svg><text x="604.2" y="1128.0" font-family="Liberation Sans" font-size="20.3" fill="#9ca3af">20 B</text><svg x="594.0" y="1052.1" width="14.0" height="14.0" viewBox="0 0 1 1" overflow="visible" stroke="#9ca3af"><path d="M0.27 0.02V0.96C0.50 0.96 0.62 0.80 0.62 0.55M0.02 0.44L0.52 0.19M0.02 0.64L0.55 0.38" fill="none" stroke-width="0.115" stroke-linecap="butt"/></svg><text x="604.2" y="1066.1" font-family="Liberation Sans" font-size="20.3" fill="#9ca3af">30 B</text><svg x="594.0" y="990.2" width="14.0" height="14.0" viewBox="0 0 1 1" overflow="visible" stroke="#9ca3af"><path d="M0.27 0.02V0.96C0.50 0.96 0.62 0.80 0.62 0.55M0.02 0.44L0.52 0.19M0.02 0.64L0.55 0.38" fill="none" stroke-width="0.115" stroke-linecap="butt"/></svg><text x="604.2" y="1004.2" font-family="Liberation Sans" font-size="20.3" fill="#9ca3af">40 B</text><svg x="594.0" y="928.3" width="14.0" height="14.0" viewBox="0 0 1 1" overflow="visible" stroke="#9ca3af"><path d="M0.27 0.02V0.96C0.50 0.96 0.62 0.80 0.62 0.55M0.02 0.44L0.52 0.19M0.02 0.64L0.55 0.38" fill="none" stroke-width="0.115" stroke-linecap="butt"/></svg><text x="604.2" y="942.3" font-family="Liberation Sans" font-size="20.3" fill="#9ca3af">50 B</text><svg x="594.0" y="866.3" width="14.0" height="14.0" viewBox="0 0 1 1" overflow="visible" stroke="#9ca3af"><path d="M0.27 0.02V0.96C0.50 0.96 0.62 0.80 0.62 0.55M0.02 0.44L0.52 0.19M0.02 0.64L0.55 0.38" fill="none" stroke-width="0.115" stroke-linecap="butt"/></svg><text x="604.2" y="880.3" font-family="Liberation Sans" font-size="20.3" fill="#9ca3af">60 B</text><svg x="594.0" y="804.4" width="14.0" height="14.0" viewBox="0 0 1 1" overflow="visible" stroke="#9ca3af"><path d="M0.27 0.02V0.96C0.50 0.96 0.62 0.80 0.62 0.55M0.02 0.44L0.52 0.19M0.02 0.64L0.55 0.38" fill="none" stroke-width="0.115" stroke-linecap="butt"/></svg><text x="604.2" y="818.4" font-family="Liberation Sans" font-size="20.3" fill="#9ca3af">70 B</text><svg x="594.0" y="742.5" width="14.0" height="14.0" viewBox="0 0 1 1" overflow="visible" stroke="#9ca3af"><path d="M0.27 0.02V0.96C0.50 0.96 0.62 0.80 0.62 0.55M0.02 0.44L0.52 0.19M0.02 0.64L0.55 0.38" fill="none" stroke-width="0.115" stroke-linecap="butt"/></svg><text x="604.2" y="756.5" font-family="Liberation Sans" font-size="20.3" fill="#9ca3af">80 B</text><text x="714.8" y="1286.2" font-family="Liberation Sans" font-size="20.3" fill="#9ca3af" text-anchor="middle">10/2</text><text x="810.4" y="1286.2" font-family="Liberation Sans" font-size="20.3" fill="#9ca3af" text-anchor="middle">11/2</text><text x="906.0" y="1286.2" font-family="Liberation Sans" font-size="20.3" fill="#9ca3af" text-anchor="middle">12/2</text><text x="1001.6" y="1286.2" font-family="Liberation Sans" font-size="20.3" fill="#9ca3af" text-anchor="middle">13/2</text><text x="1097.2" y="1286.2" font-family="Liberation Sans" font-size="20.3" fill="#9ca3af" text-anchor="middle">14/2</text><text x="1192.8" y="1286.2" font-family="Liberation Sans" font-size="20.3" fill="#9ca3af" text-anchor="middle">15/2</text><text x="1288.3" y="1286.2" font-family="Liberation Sans" font-size="20.3" fill="#9ca3af" text-anchor="middle">16/2</text><text x="1383.9" y="1286.2" font-family="Liberation Sans" font-size="20.3" fill="#9ca3af" text-anchor="middle">17/2</text><text x="1479.5" y="1286.2" font-family="Liberation Sans" font-size="20.3" fill="#9ca3af" text-anchor="middle">18/2</text><text x="1575.1" y="1286.2" font-family="Liberation Sans" font-size="20.3" fill="#9ca3af" text-anchor="middle">19/2</text><text x="1670.7" y="1286.2" font-family="Liberation Sans" font-size="20.3" fill="#9ca3af" text-anchor="middle">20/2</text><text x="1766.3" y="1286.2" font-family="Liberation Sans" font-size="20.3" fill="#9ca3af" text-anchor="middle">21/2</text><text x="1861.9" y="1286.2" font-family="Liberation Sans" font-size="20.3" fill="#9ca3af" text-anchor="middle">22/2</text><text x="1957.5" y="1286.2" font-family="Liberation Sans" font-size="20.3" fill="#9ca3af" text-anchor="middle">23/2</text><text x="2053.1" y="1286.2" font-family="Liberation Sans" font-size="20.3" fill="#9ca3af" text-anchor="middle">24/2</text><text x="2148.7" y="1286.2" font-family="Liberation Sans" font-size="20.3" fill="#9ca3af" text-anchor="middle">25/2</text><text x="2244.2" y="1286.2" font-family="Liberation Sans" font-size="20.3" fill="#9ca3af" text-anchor="middle">26/2</text><text x="2339.8" y="1286.2" font-family="Liberation Sans" font-size="20.3" fill="#9ca3af" text-anchor="middle">27/2</text><text x="2435.4" y="1286.2" font-family="Liberation Sans" font-size="20.3" fill="#9ca3af" text-anchor="middle">28/2</text><text x="2531.0" y="1286.2" font-family="Liberation Sans" font-size="20.3" fill="#9ca3af" text-anchor="middle">1/3</text><text x="2626.6" y="1286.2" font-family="Liberation Sans" font-size="20.3" fill="#9ca3af" text-anchor="middle">2/3</text><text x="2722.2" y="1286.2" font-family="Liberation Sans" font-size="20.3" fill="#9ca3af" text-anchor="middle">3/3</text><circle cx="1490.5" cy="1340.7" r="15.5" fill="#24378a" fill-opacity="0.8" stroke="#2c4598" stroke-width="2"/><text x="1512" y="1348" font-family="Liberation Sans" font-size="21.8" fill="#9ca3af">RubikPara</text><circle cx="1657.5" cy="1340.7" r="15.5" fill="#35716b" fill-opacity="0.8" stroke="#367a70" stroke-width="2"/><text x="1679" y="1348" font-family="Liberation Sans" font-size="21.8" fill="#9ca3af">PayTR</text><circle cx="1787" cy="1340.7" r="15.5" fill="#8a4620" fill-opacity="0.8" stroke="#8a4822" stroke-width="2"/><text x="1808" y="1348" font-family="Liberation Sans" font-size="21.8" fill="#9ca3af">AhlPay</text></svg>
</body></html>
